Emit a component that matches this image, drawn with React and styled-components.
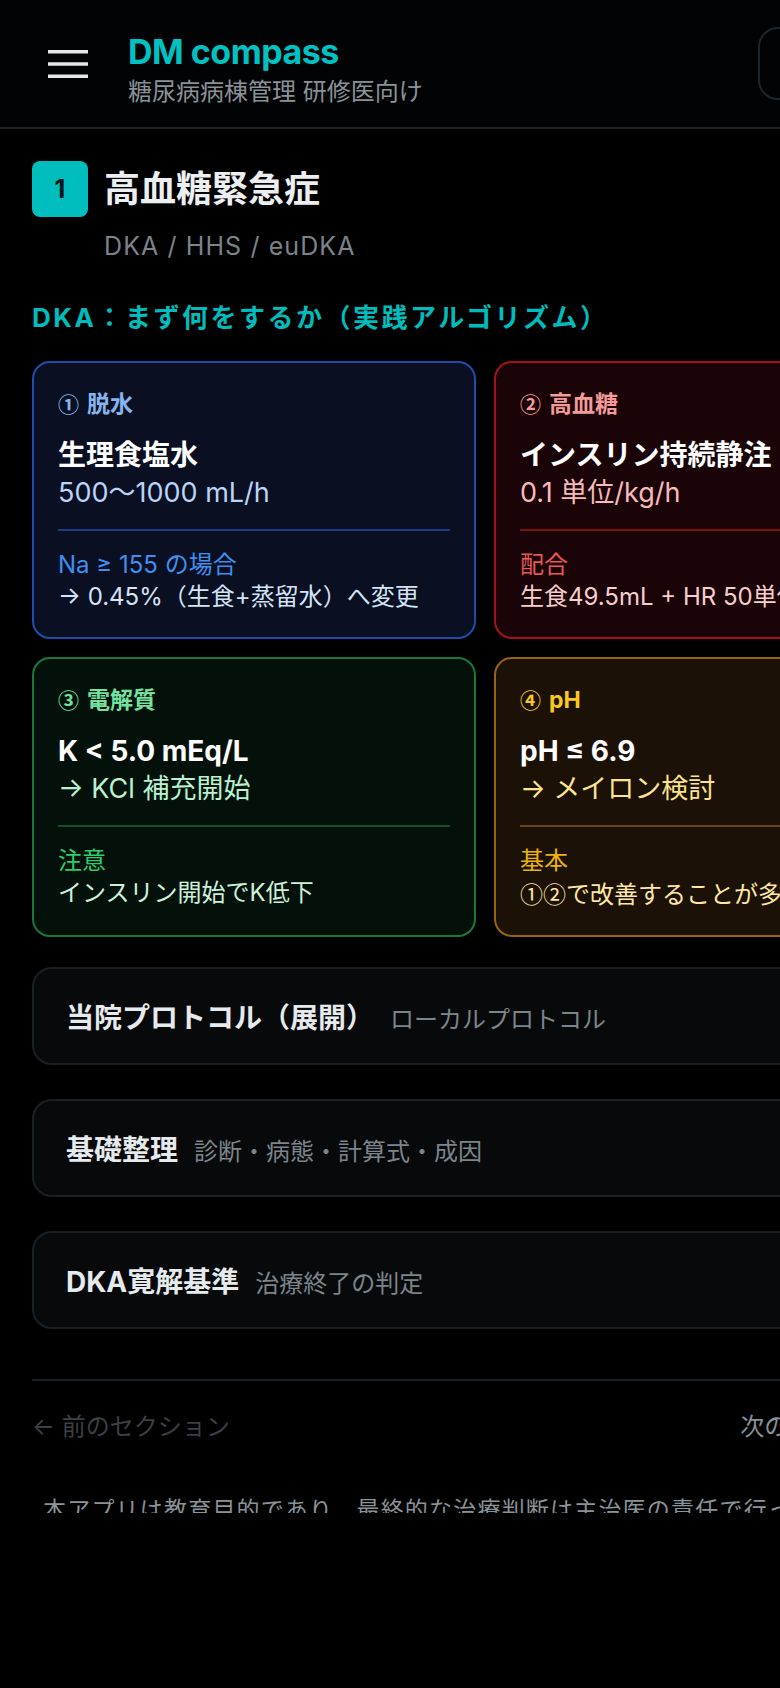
import React from 'react';
import styled, { createGlobalStyle } from 'styled-components';
import { Search } from 'lucide-react';

const GlobalStyle = createGlobalStyle`
  * { box-sizing: border-box; }
  html, body {
    margin: 0;
    padding: 0;
    background: #000;
    overflow-x: hidden;
  }
  body {
    font-family: "Inter", "Noto Sans CJK JP", sans-serif;
    color: #e8ecef;
  }
`;

const tones = {
  blue: {
    bg: '#0a1022',
    border: '#1e4eac',
    label: '#86b4ef',
    value: '#b9d4f6',
    rule: '#1d3c88',
    noteLabel: '#3f8ef0',
    note: '#d4e3f6',
  },
  red: {
    bg: '#1a0407',
    border: '#a0141b',
    label: '#f49a9a',
    value: '#f7baba',
    rule: '#7c1313',
    noteLabel: '#e65858',
    note: '#f7cdcd',
  },
  green: {
    bg: '#04110b',
    border: '#16783b',
    label: '#72e2a0',
    value: '#b8f2d1',
    rule: '#14502c',
    noteLabel: '#2ccd6c',
    note: '#cdf2dc',
  },
  amber: {
    bg: '#1b1107',
    border: '#9a6311',
    label: '#f8c81d',
    value: '#fde48b',
    rule: '#6a4412',
    noteLabel: '#eab30d',
    note: '#fde7a3',
  },
};

const Page = styled.div`
  width: 970px;
  min-height: 100vh;
  background: #000;
`;

const Header = styled.header`
  display: flex;
  align-items: center;
  height: 129px;
  padding: 0 32px;
  border-bottom: 2px solid #1a2328;
  background: #020304;
`;

const MenuButton = styled.button`
  display: flex;
  padding: 16px;
  border: 0;
  background: none;
  color: #e6eaee;
  cursor: pointer;
`;

const Brand = styled.div`
  display: flex;
  flex-direction: column;
  margin: 13px 0 0 24px;
`;

const BrandTitle = styled.h1`
  margin: 0;
  font-size: 34px;
  line-height: 34px;
  font-weight: 700;
  letter-spacing: -0.5px;
  color: #00c2c2;
`;

const BrandSub = styled.span`
  margin-top: 9px;
  font-size: 24px;
  line-height: 28px;
  color: #8a9298;
`;

const HeaderAction = styled.button`
  display: flex;
  align-items: center;
  justify-content: center;
  gap: 8px;
  width: 180px;
  height: 73px;
  margin-left: auto;
  border: 2px solid #1c262c;
  border-radius: 20px;
  background: transparent;
  color: #c9d0d5;
  font: inherit;
  font-size: 22px;
`;

const Main = styled.main`
  padding: 32px 32px 0;
`;

const SectionHead = styled.div`
  display: grid;
  grid-template-columns: 56px 1fr;
  column-gap: 16px;
  align-items: center;
`;

const Badge = styled.div`
  display: flex;
  align-items: center;
  justify-content: center;
  width: 56px;
  height: 56px;
  border-radius: 8px;
  background: #00bebe;
  color: #061214;
  font-size: 25px;
  font-weight: 700;
`;

const SectionTitle = styled.h2`
  margin: 0;
  font-size: 36px;
  line-height: 46px;
  font-weight: 700;
  color: #eceff1;
`;

const SectionSub = styled.div`
  grid-column: 2;
  margin-top: 11px;
  font-size: 25px;
  line-height: 36px;
  letter-spacing: 1.1px;
  color: #7b848b;
`;

const AlgoTitle = styled.h3`
  margin: 36px 0 0;
  font-size: 26px;
  line-height: 36px;
  font-weight: 700;
  letter-spacing: 2.5px;
  color: #00bcbc;
`;

const CardGrid = styled.div`
  display: grid;
  grid-template-columns: 444px 444px;
  gap: 18px;
  margin-top: 25px;
`;

const Card = styled.div`
  padding: 24px;
  border: 2px solid ${(p) => tones[p.$tone].border};
  border-radius: 18px;
  background: ${(p) => tones[p.$tone].bg};
`;

const CardLabel = styled.div`
  display: flex;
  align-items: baseline;
  gap: 8px;
  font-size: 23px;
  line-height: 32px;
  font-weight: 700;
  color: ${(p) => tones[p.$tone].label};
`;

const Circled = styled.span`
  font-family: "Noto Sans CJK JP", sans-serif;
  font-size: ${(p) => p.$size || '1em'};
  font-weight: ${(p) => (p.$bold ? 700 : 400)};
`;

const CardTitle = styled.div`
  margin-top: 16px;
  font-size: 28px;
  line-height: 38px;
  font-weight: 700;
  color: #ffffff;
  white-space: nowrap;
`;

const CardValue = styled.div`
  font-size: 27px;
  line-height: 38px;
  color: ${(p) => tones[p.$tone].value};
  white-space: nowrap;
`;

const CardNote = styled.div`
  margin-top: 17px;
  padding-top: 18px;
  border-top: 2px solid ${(p) => tones[p.$tone].rule};
  font-size: 24px;
  line-height: 32px;
  white-space: nowrap;
`;

const NoteLabel = styled.div`
  color: ${(p) => tones[p.$tone].noteLabel};
`;

const NoteText = styled.div`
  color: ${(p) => tones[p.$tone].note};
`;

const Accordion = styled.div`
  display: flex;
  flex-direction: column;
  gap: 34px;
  margin-top: 30px;
`;

const AccordionRow = styled.button`
  display: flex;
  flex-wrap: wrap;
  align-items: baseline;
  align-content: center;
  gap: 16px;
  height: 98px;
  padding: 0 32px;
  border: 2px solid #192126;
  border-radius: 20px;
  background: #07090b;
  font: inherit;
  text-align: left;
`;

const RowTitle = styled.span`
  font-size: 28px;
  font-weight: 700;
  color: #e6eaed;
`;

const RowSub = styled.span`
  font-size: 24px;
  color: #7c858b;
`;

const Rule = styled.hr`
  margin: 50px 0 0;
  height: 2px;
  border: 0;
  background: #1a2227;
`;

const Pager = styled.nav`
  display: flex;
  justify-content: space-between;
  padding-top: 28px;
  font-size: 24px;
  line-height: 36px;
`;

const PagerLink = styled.span`
  color: ${(p) => (p.$disabled ? '#394046' : '#89929a')};
`;

const Disclaimer = styled.p`
  margin: 48px 0 0;
  padding-left: 11px;
  font-size: 23px;
  line-height: 35px;
  letter-spacing: 1.2px;
  white-space: nowrap;
  color: #8a9399;
`;

const BottomBar = styled.div`
  position: fixed;
  left: 0;
  right: 0;
  bottom: 0;
  height: 175px;
  background: #000;
`;

const cards = [
  {
    tone: 'blue',
    num: '①',
    label: '脱水',
    title: '生理食塩水',
    value: '500〜1000 mL/h',
    noteLabel: 'Na ≥ 155 の場合',
    note: '→ 0.45%（生食+蒸留水）へ変更',
  },
  {
    tone: 'red',
    num: '②',
    label: '高血糖',
    title: 'インスリン持続静注',
    value: '0.1 単位/kg/h',
    noteLabel: '配合',
    note: '生食49.5mL + HR 50単位（1単位/mL）',
  },
  {
    tone: 'green',
    num: '③',
    label: '電解質',
    title: 'K < 5.0 mEq/L',
    value: '→ KCl 補充開始',
    noteLabel: '注意',
    note: 'インスリン開始でK低下',
  },
  {
    tone: 'amber',
    num: '④',
    label: 'pH',
    title: 'pH ≤ 6.9',
    value: '→ メイロン検討',
    noteLabel: '基本',
    noteNum: '①②',
    note: 'で改善することが多い',
  },
];

const rows = [
  { title: '当院プロトコル（展開）', sub: 'ローカルプロトコル' },
  { title: '基礎整理', sub: '診断・病態・計算式・成因' },
  { title: 'DKA寛解基準', sub: '治療終了の判定' },
];

const MenuIcon = () => (
  <svg width="40" height="28" viewBox="0 0 40 28" fill="currentColor">
    <rect x="0" y="0" width="40" height="3.5" />
    <rect x="0" y="12.25" width="40" height="3.5" />
    <rect x="0" y="24.5" width="40" height="3.5" />
  </svg>
);

export default function App() {
  return (
    <>
      <GlobalStyle />
      <Page>
        <Header>
          <MenuButton aria-label="menu">
            <MenuIcon />
          </MenuButton>
          <Brand>
            <BrandTitle>DM compass</BrandTitle>
            <BrandSub>糖尿病病棟管理 研修医向け</BrandSub>
          </Brand>
          <HeaderAction>
            <Search size={24} />
            検索
          </HeaderAction>
        </Header>

        <Main>
          <SectionHead>
            <Badge>1</Badge>
            <SectionTitle>高血糖緊急症</SectionTitle>
            <SectionSub>DKA / HHS / euDKA</SectionSub>
          </SectionHead>

          <AlgoTitle>DKA：まず何をするか（実践アルゴリズム）</AlgoTitle>

          <CardGrid>
            {cards.map((c) => (
              <Card key={c.label} $tone={c.tone}>
                <CardLabel $tone={c.tone}>
                  <Circled $size="21px" $bold>
                    {c.num}
                  </Circled>
                  {c.label}
                </CardLabel>
                <CardTitle>{c.title}</CardTitle>
                <CardValue $tone={c.tone}>{c.value}</CardValue>
                <CardNote $tone={c.tone}>
                  <NoteLabel $tone={c.tone}>{c.noteLabel}</NoteLabel>
                  <NoteText $tone={c.tone}>
                    {c.noteNum && <Circled $size="23px">{c.noteNum}</Circled>}
                    {c.note}
                  </NoteText>
                </CardNote>
              </Card>
            ))}
          </CardGrid>

          <Accordion>
            {rows.map((r) => (
              <AccordionRow key={r.title}>
                <RowTitle>{r.title}</RowTitle>
                <RowSub>{r.sub}</RowSub>
              </AccordionRow>
            ))}
          </Accordion>

          <Rule />

          <Pager>
            <PagerLink $disabled>← 前のセクション</PagerLink>
            <PagerLink>次のセクション →</PagerLink>
          </Pager>

          <Disclaimer>
            本アプリは教育目的であり、最終的な治療判断は主治医の責任で行ってください。
          </Disclaimer>
        </Main>
        <BottomBar />
      </Page>
    </>
  );
}
